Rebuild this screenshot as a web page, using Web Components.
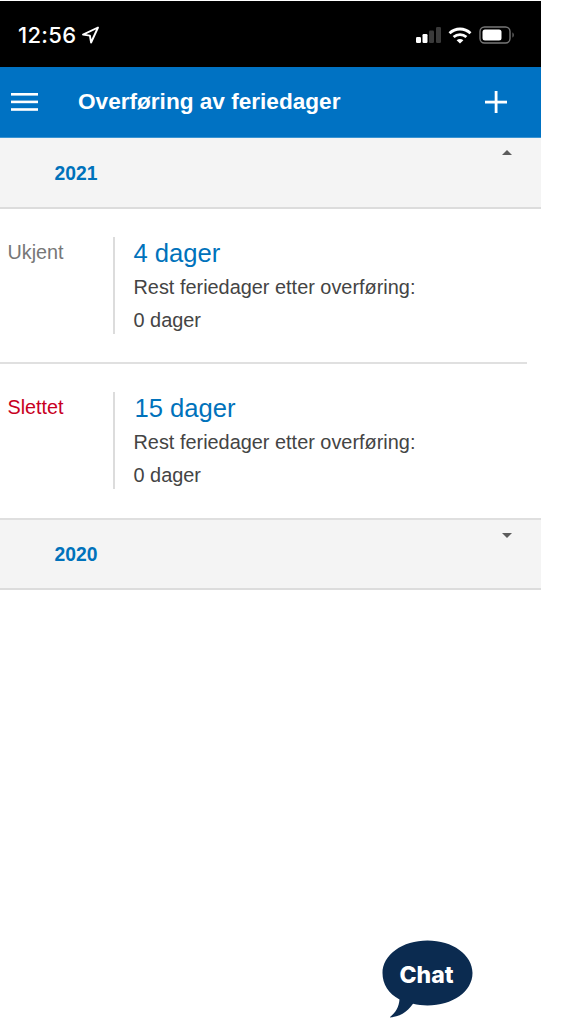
<!DOCTYPE html>
<html lang="no">
<head>
<meta charset="utf-8">
<title>Overføring av feriedager</title>
<style>
  html, body { margin: 0; padding: 0; background: #fff; }
  body { font-family: "Liberation Sans", Arial, sans-serif; }
  .app { width: 541px; height: 1033px; position: relative; }
</style>
</head>
<body>
<div class="app">
  <status-bar time="12:56"></status-bar>
  <app-bar>Overføring av feriedager</app-bar>
  <year-header year="2021" open></year-header>
  <transfer-row status="Ukjent" days="4 dager" remaining="0 dager" divider="inset"></transfer-row>
  <transfer-row status="Slettet" tone="deleted" days="15 dager" remaining="0 dager"></transfer-row>
  <year-header year="2020"></year-header>
  <chat-bubble></chat-bubble>
</div>

<script>
class StatusBar extends HTMLElement {
    constructor() {
        super();
        this.attachShadow({ mode: 'open' });
    }

    connectedCallback() {
        this.shadowRoot.innerHTML = `
      <style>
        :host {
          display: flex;
          align-items: center;
          justify-content: space-between;
          box-sizing: border-box;
          height: 67px;
          padding: 2px 26px 0 18px;
          background: #000;
          color: #fff;
          border-top: 1px solid #fff;
        }
        .left, .right { display: flex; align-items: center; }
        .time {
          font: 500 22px/1 Inter, "Liberation Sans", sans-serif;
          letter-spacing: 0.3px;
        }
        .arrow { margin-left: 5px; }
        svg { display: block; }
        .wifi { margin: 0 7px; }
      </style>
      <div class="left">
        <span class="time">${this.getAttribute('time')}</span>
        <svg class="arrow" width="19" height="18" viewBox="0 0 18 18" fill="none" stroke="#fff" stroke-width="1.9" stroke-linejoin="round">
          <path d="M16.500 1.500 1.500 8.600 8.400 9.600 9.600 16.500Z"/>
        </svg>
      </div>
      <div class="right">
        <svg width="25" height="16" viewBox="0 0 25 16">
          <rect x="0" y="10" width="5" height="6" rx="1.2" fill="#fff"/>
          <rect x="6.500" y="7" width="5" height="9" rx="1.2" fill="#fff"/>
          <rect x="13" y="3.500" width="5" height="12.500" rx="1.2" fill="#3a3a3a"/>
          <rect x="20" y="0" width="5" height="16" rx="1.2" fill="#3a3a3a"/>
        </svg>
        <svg class="wifi" width="24" height="17" viewBox="0 0 24 17" fill="none" stroke="#fff" stroke-width="2.8">
          <path d="M1.500 6.200C7.500 .6 16.500 .6 22.500 6.200"/>
          <path d="M5.600 10C9.200 6.800 14.800 6.800 18.400 10"/>
          <path d="M12 16.600 8.600 13.200C10.600 11.600 13.400 11.600 15.400 13.200Z" fill="#fff" stroke="none"/>
        </svg>
        <svg width="36" height="18" viewBox="0 0 36 18">
          <rect x="1" y="1" width="30" height="16" rx="4.500" fill="none" stroke="#777" stroke-width="1.4"/>
          <rect x="3.500" y="3.500" width="19" height="11" rx="2.500" fill="#fff"/>
          <path d="M33.500 6.500c1.600.4 1.600 4.600 0 5Z" fill="#777"/>
        </svg>
      </div>
    `;
    }
}

class AppBar extends HTMLElement {
    constructor() {
        super();
        this.attachShadow({ mode: 'open' });
    }

    connectedCallback() {
        this.shadowRoot.innerHTML = `
      <style>
        :host {
          display: flex;
          align-items: center;
          box-sizing: border-box;
          height: 71px;
          padding: 0 34px 0 11px;
          background: #0072c3;
          color: #fff;
          border-bottom: 1px solid #3a94d2;
        }
        .title {
          flex: 1;
          margin: 1px 0 0 40px;
          font: bold 22.6px/1 "Liberation Sans", Arial, sans-serif;
        }
        svg { display: block; }
      </style>
      <svg width="27" height="18" viewBox="0 0 27 18" fill="#fff">
        <rect y="0" width="27" height="2.600"/>
        <rect y="7.600" width="27" height="2.600"/>
        <rect y="15.200" width="27" height="2.600"/>
      </svg>
      <span class="title"><slot></slot></span>
      <svg width="22" height="22" viewBox="0 0 22 22" fill="#fff">
        <rect x="9.700" y="0" width="2.800" height="22"/>
        <rect x="0" y="9.700" width="22" height="2.800"/>
      </svg>
    `;
    }
}

class YearHeader extends HTMLElement {
    constructor() {
        super();
        this.attachShadow({ mode: 'open' });
    }

    connectedCallback() {
        const open = this.hasAttribute('open');
        this.shadowRoot.innerHTML = `
      <style>
        :host {
          display: block;
          position: relative;
          box-sizing: border-box;
          height: 71px;
          padding: 26px 0 0 54.500px;
          background: #f4f4f4;
          border-bottom: 2px solid #dcdcdc;
          color: #0072bb;
          font: bold 19.300px/20px "Liberation Sans", Arial, sans-serif;
        }
        :host(:not([open])) { border-top: 2px solid #dfdfdf; height: 72px; padding-top: 25px; }
        .caret {
          position: absolute;
          right: 29px;
          top: 12px;
          width: 0;
          height: 0;
          border-left: 5px solid transparent;
          border-right: 5px solid transparent;
          ${open ? 'border-bottom: 5px solid #5c5c5c;' : 'border-top: 5px solid #5c5c5c;'}
        }
        :host(:not([open])) .caret { top: 13px; }
      </style>
      <span>${this.getAttribute('year')}</span>
      <span class="caret"></span>
    `;
    }
}

class TransferRow extends HTMLElement {
    constructor() {
        super();
        this.attachShadow({ mode: 'open' });
    }

    connectedCallback() {
        this.shadowRoot.innerHTML = `
      <style>
        :host {
          display: flex;
          align-items: flex-start;
          box-sizing: border-box;
          height: 155px;
          padding-top: 28px;
          font-family: "Liberation Sans", Arial, sans-serif;
        }
        :host([divider="inset"]) { margin-right: 14px; border-bottom: 2px solid #e0e0e0; }
        :host(:not([divider])) { height: 154px; }
        .status {
          width: 113px;
          box-sizing: border-box;
          padding: 4px 0 0 7.500px;
          font-size: 19.800px;
          line-height: 22px;
          color: #777;
        }
        :host([tone="deleted"]) .status { color: #c8001e; }
        .body {
          height: 97px;
          padding-left: 18.500px;
          border-left: 2px solid #dcdcdc;
          color: #444;
          font-size: 19.900px;
        }
        .days { margin-top: 1px; font-size: 25.600px; line-height: 30px; color: #0072bb; }
        :host([tone="deleted"]) .days { padding-left: 1px; }
        .line { line-height: 33px; margin-top: 3px; }
        .line + .line { margin-top: 0; }
      </style>
      <div class="status">${this.getAttribute('status')}</div>
      <div class="body">
        <div class="days">${this.getAttribute('days')}</div>
        <div class="line">Rest feriedager etter overføring:</div>
        <div class="line">${this.getAttribute('remaining')}</div>
      </div>
    `;
    }
}

class ChatBubble extends HTMLElement {
    constructor() {
        super();
        this.attachShadow({ mode: 'open' });
    }

    connectedCallback() {
        this.shadowRoot.innerHTML = `
      <style>
        :host {
          position: absolute;
          left: 382px;
          top: 939px;
          width: 92px;
          height: 80px;
          display: block;
        }
        svg { display: block; position: absolute; inset: 0; }
        span {
          position: absolute;
          left: 0;
          right: 3px;
          top: 22px;
          text-align: center;
          color: #fff;
          font: 800 23px/28px Inter, "Liberation Sans", sans-serif;
        }
      </style>
      <svg width="92" height="80" viewBox="0 0 92 80">
        <path fill="#0b2b50" d="M45.500 1.500C70.500 1.500 90.500 15.800 90.500 34C90.500 52.500 70.500 66.500 45.500 66.500C40.500 66.500 35.500 66 31 64.800C25 73.500 17 78 7.500 78.500C14 73.500 17 67.500 17.500 60.500C6.500 54.500 0.500 45 0.500 34C0.500 15.800 20.500 1.500 45.500 1.500Z"/>
      </svg>
      <span>Chat</span>
    `;
    }
}

customElements.define('status-bar', StatusBar);
customElements.define('app-bar', AppBar);
customElements.define('year-header', YearHeader);
customElements.define('transfer-row', TransferRow);
customElements.define('chat-bubble', ChatBubble);
</script>
</body>
</html>
